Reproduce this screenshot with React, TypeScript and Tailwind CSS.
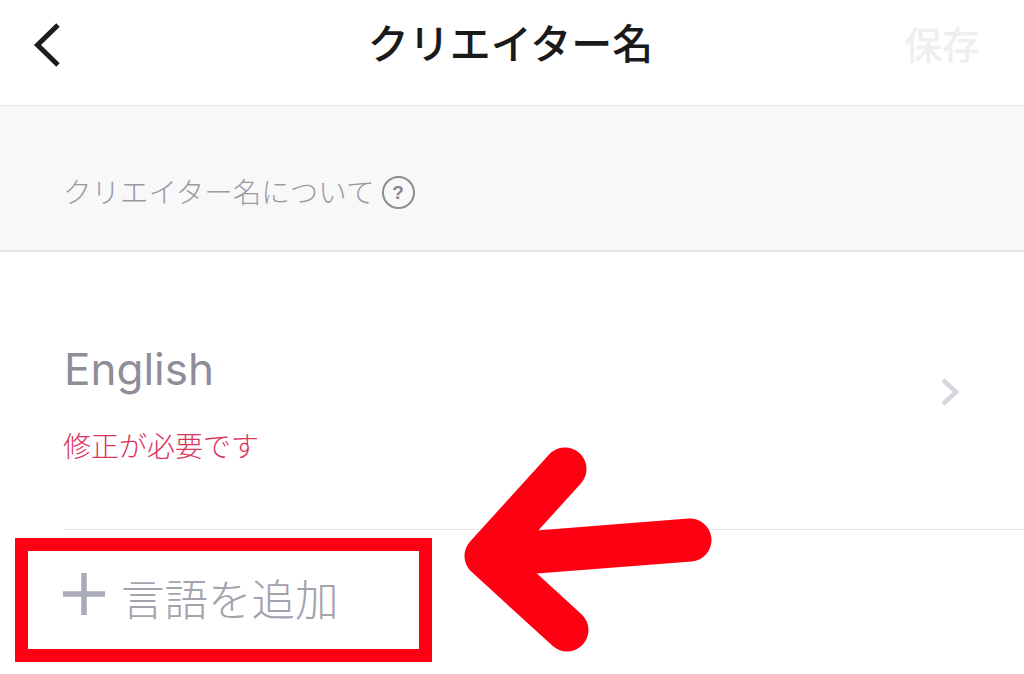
import React from "react";

const jp = "font-['Liberation_Sans','Noto_Sans_CJK_JP',sans-serif]";

export default function App() {
  return (
    <div className={`relative h-[674px] w-[1024px] overflow-hidden bg-white ${jp}`}>
      {/* header */}
      <header className="flex h-[106px] items-center justify-between border-b border-[#e6e6e8] pl-[32px] pr-[44px]">
        <svg width="32" height="48" viewBox="0 0 32 48" fill="none" className="mb-[15px]">
          <path d="M26 4 L5.5 24 L26 44" stroke="#1c1c1c" strokeWidth="5" />
        </svg>
        <h1 className="mb-[16px] ml-[53px] text-[41px] leading-[48px] font-medium text-[#1a1a1a]">クリエイター名</h1>
        <span className="mb-[14px] text-[38px] leading-[48px] font-medium text-[#eeeef3]">保存</span>
      </header>

      {/* notice band */}
      <div className="flex h-[146px] items-end border-b-2 border-[#e8e8ea] bg-[#f8f8f9] pb-[40px] pl-[63px]">
        <span className="text-[28.5px] leading-[34px] font-light text-[#9a9aa3]">クリエイター名について</span>
        <span className="mb-[1px] ml-[7px] flex h-[33px] w-[33px] items-center justify-center rounded-full border-2 border-[#8c8c94] text-[19px] leading-none font-bold text-[#85858d]">
          ?
        </span>
      </div>

      {/* language row */}
      <div className="ml-[64px] flex h-[278px] items-start justify-between border-b border-[#e8e8ec] pr-[64px]">
        <div className="pt-[91px]">
          <div className="font-['Inter',sans-serif] text-[44px] leading-[52px] text-[#8e8e99]">English</div>
          <div className="mt-[36px] -ml-[1px] text-[28px] leading-[34px] font-light text-[#d9345c]">修正が必要です</div>
        </div>
        <svg width="20" height="30" viewBox="0 0 20 30" fill="none" className="mt-[125px]">
          <path d="M3 3 L16 15 L3 27" stroke="#d5d5dc" strokeWidth="4.5" />
        </svg>
      </div>

      {/* add language */}
      <div className="ml-[63px] flex items-start pt-[43px]">
        <svg width="42" height="42" viewBox="0 0 42 42">
          <path d="M21 0 V42 M0 21 H42" stroke="#a9abb8" strokeWidth="5.5" />
        </svg>
        <span className="ml-[16px] text-[43.5px] leading-[56px] font-light text-[#a2a3ad]">言語を追加</span>
      </div>

      {/* annotation: red box */}
      <div className="absolute top-[538px] left-[15px] h-[124px] w-[417px] border-[13px] border-[#ff0012]" />

      {/* annotation: red arrow */}
      <svg className="absolute top-0 left-0" width="1024" height="674" viewBox="0 0 1024 674" fill="none">
        <path
          d="M565 469 L486 556 L567 630 M486 556 L690 540"
          stroke="#ff0012"
          strokeWidth="43"
          strokeLinecap="round"
          strokeLinejoin="round"
        />
      </svg>
    </div>
  );
}
